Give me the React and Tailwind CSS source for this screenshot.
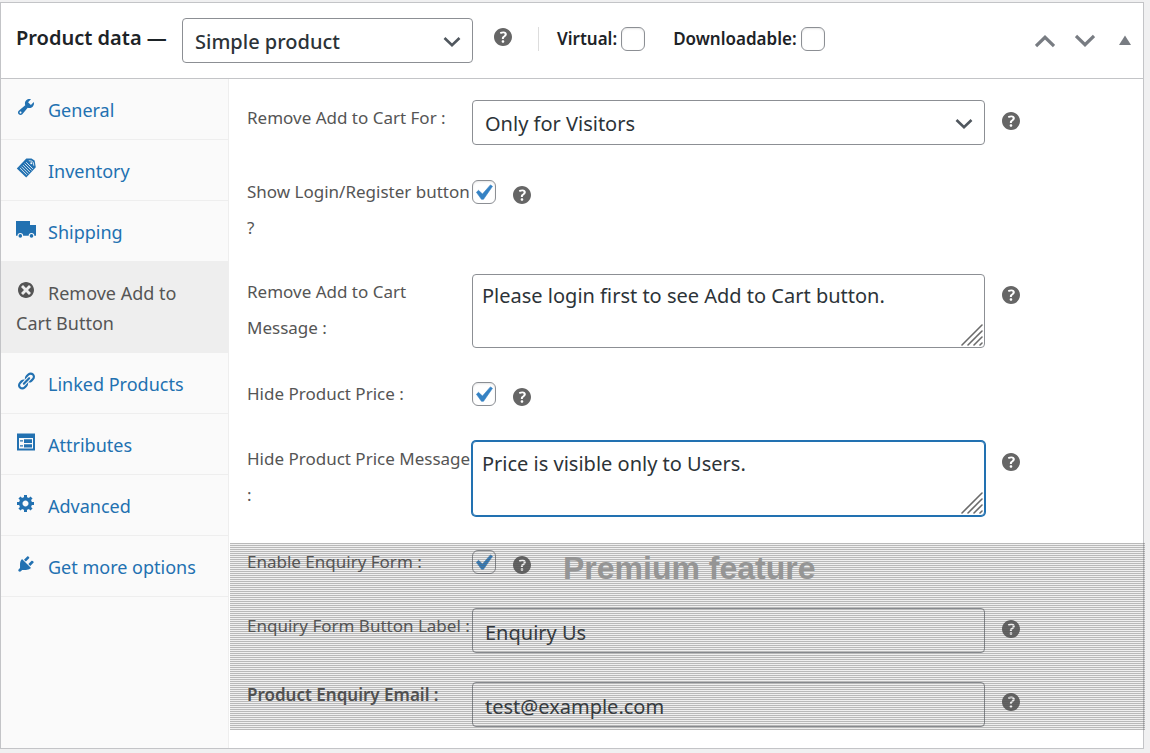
import { useState } from "react";

function HelpTip({ label }) {
  return (
    <button type="button" aria-label={label} className="block size-[18px] shrink-0 text-[#666666]">
      <svg viewBox="3 3 14 14" className="size-[18px]" fill="currentColor" aria-hidden="true">
        <path d="M17 10c0-3.87-3.14-7-7-7-3.87 0-7 3.13-7 7s3.13 7 7 7c3.86 0 7-3.13 7-7zm-6.3 1.48H9.14v-.43c0-.38.08-.7.24-.98s.46-.57.88-.89c.41-.29.68-.53.81-.71.14-.18.2-.39.2-.62 0-.25-.09-.44-.28-.58-.19-.13-.45-.19-.79-.19-.58 0-1.25.19-2 .57l-.64-1.28c.87-.49 1.8-.74 2.77-.74.81 0 1.45.2 1.92.58.48.39.71.91.71 1.55 0 .43-.09.8-.29 1.11-.19.32-.57.67-1.11 1.06-.38.28-.61.49-.71.63-.1.15-.15.34-.15.57v.35zm-1.47 2.74c-.18-.17-.27-.42-.27-.73 0-.33.08-.58.26-.75s.43-.25.77-.25c.32 0 .57.09.75.26s.27.42.27.74c0 .3-.09.55-.27.72-.18.18-.43.27-.75.27-.33 0-.58-.09-.76-.26z" />
      </svg>
    </button>
  );
}

function Checkbox({ id, defaultChecked = false, shaded = false }) {
  const [checked, setChecked] = useState(defaultChecked);
  return (
    <span className="relative block size-6 shrink-0">
      <input
        id={id}
        type="checkbox"
        checked={checked}
        onChange={(e) => setChecked(e.target.checked)}
        className={
          shaded
            ? "block size-6 appearance-none rounded-md border border-[#8c8f94] bg-transparent"
            : "block size-6 appearance-none rounded-md border border-[#8c8f94] bg-white shadow-[inset_0_1px_2px_rgba(0,0,0,0.1)]"
        }
      />
      {checked && (
        <svg viewBox="5.5 4.5 11 10" className="pointer-events-none absolute top-1 left-1 h-4 w-[17px]" fill="#3582c4" stroke="#3582c4" strokeWidth=".4" aria-hidden="true">
          <path d="M14.83 4.89l1.34.94-5.81 8.38H9.02L5.78 9.67l1.34-1.25 2.57 2.4z" />
        </svg>
      )}
    </span>
  );
}

function Select({ id, label, options, className }) {
  return (
    <span className="relative block">
      <select
        id={id}
        aria-label={label}
        className={`block h-[45px] w-full appearance-none rounded border border-[#8c8f94] bg-white pt-[3px] pr-10 pl-3 text-[20px] leading-6 text-[#2c3338] ${className}`}
      >
        {options.map((o) => (
          <option key={o}>{o}</option>
        ))}
      </select>
      <svg viewBox="0 0 18 12" className="pointer-events-none absolute top-[18px] right-3 h-3 w-[18px]" fill="none" stroke="#50575e" strokeWidth="2.6" aria-hidden="true">
        <path d="M1.5 2L9 9.3 16.5 2" />
      </svg>
    </span>
  );
}

function TextArea({ id, defaultValue, focused = false }) {
  return (
    <span className="relative block">
      <textarea
        id={id}
        defaultValue={defaultValue}
        rows={2}
        className={
          focused
            ? "block h-[75px] w-full resize-none rounded border border-[#2271b1] bg-white px-[9px] py-2 text-[20px] leading-7 text-[#2c3338] shadow-[0_0_0_1px_#2271b1] outline-none"
            : "block h-[74px] w-full resize-none rounded border border-[#8c8f94] bg-white px-[9px] py-[7px] text-[20px] leading-7 text-[#2c3338]"
        }
      />
      <svg viewBox="0 0 22 22" className="pointer-events-none absolute right-[2px] bottom-[2px] size-[22px]" fill="none" stroke="#6b6b6b" strokeWidth="1.6" strokeLinecap="round" aria-hidden="true">
        <path d="M1 21L21 1M7 21L21 7M13 21L21 13M19 21L21 19" />
      </svg>
    </span>
  );
}

const tabs = [
  {
    name: "General",
    icon: (
      <path d="M16.68 9.77c-1.34 1.34-3.3 1.67-4.95.99l-5.41 6.52c-.99.99-2.59.99-3.58 0s-.99-2.59 0-3.57l6.52-5.42c-.68-1.65-.35-3.61.99-4.95 1.28-1.28 3.12-1.62 4.72-1.06l-2.89 2.89 2.82 2.82 2.86-2.87c.53 1.58.18 3.39-1.08 4.65zM3.81 16.21c.4.39 1.04.39 1.43 0 .4-.4.4-1.04 0-1.43-.39-.4-1.03-.4-1.43 0-.39.39-.39 1.03 0 1.43z" />
    ),
  },
  {
    name: "Inventory",
    icon: (
      <>
        <path d="M.8 10.4L10.3.6 15.5.6 18.6 2.6 19.8 9.3 10.2 19.4z" />
        <g fill="none" stroke="#fafafa" strokeWidth=".8">
          <path d="M5.4 8.6l6.9 6.9M7 7.1l6.9 6.9M8.6 5.6l6.9 6.8M10.2 4.2l6.7 6.7M3.9 10l6.9 6.9" />
          <path d="M12.8 2.7l3.1.4 1.4 1.6.5 3" />
        </g>
        <circle cx="15.3" cy="5.2" r="1" fill="#fafafa" />
      </>
    ),
  },
  {
    name: "Shipping",
    icon: (
      <>
        <path d="M0 2H14V6H20V18H0z" />
        <g fill="#fafafa">
          <path d="M14.3 5.2h.7v.8h-.7zM0 16.7h20V20H0z" />
          <circle cx="4.3" cy="16.8" r="2.8" />
          <circle cx="15.5" cy="16.8" r="2.8" />
        </g>
        <circle cx="4.3" cy="16.9" r="1.8" />
        <circle cx="15.5" cy="16.9" r="1.8" />
      </>
    ),
  },
  {
    name: "Remove Add to Cart Button",
    active: true,
    icon: <path d="M10 2c4.42 0 8 3.58 8 8s-3.58 8-8 8-8-3.58-8-8 3.58-8 8-8zm5 11l-3-3 3-3-2-2-3 3-3-3-2 2 3 3-3 3 2 2 3-3 3 3z" />,
  },
  {
    name: "Linked Products",
    icon: (
      <path d="M17.74 2.76c1.68 1.69 1.68 4.41 0 6.1l-1.53 1.52c-1.12 1.12-2.7 1.47-4.14 1.09l2.62-2.61.76-.77.76-.76c.84-.84.84-2.2 0-3.04-.84-.85-2.2-.85-3.04 0l-.77.76-3.38 3.38c-.37-1.44-.02-3.02 1.1-4.14l1.52-1.53c1.69-1.68 4.42-1.68 6.1 0zM8.59 13.43l5.34-5.34c.42-.42.42-1.1 0-1.52-.44-.43-1.13-.39-1.53 0l-5.33 5.34c-.42.42-.42 1.1 0 1.52.44.43 1.13.39 1.52 0zm-.76 2.29l4.14-4.15c.38 1.44.03 3.02-1.09 4.14l-1.52 1.53c-1.69 1.68-4.41 1.68-6.1 0-1.68-1.68-1.68-4.42 0-6.1l1.53-1.52c1.12-1.12 2.7-1.47 4.14-1.1l-4.14 4.15c-.85.84-.85 2.2 0 3.05.84.84 2.2.84 3.04 0z" />
    ),
  },
  {
    name: "Attributes",
    icon: (
      <>
        <path d="M1 1.5h18V18.5H1z" />
        <path d="M3 6h14v10.5H3z" fill="#fafafa" />
        <path d="M8 7.3h8v3.7H8zM8 12.3h8v3.2H8zM4 8.3h3v1.2H4zM4 13.3h3v1.2H4z" />
      </>
    ),
  },
  {
    name: "Advanced",
    icon: (
      <path d="M18 12h-2.18c-.17.7-.44 1.35-.81 1.93l1.54 1.54-2.1 2.1-1.54-1.54c-.58.36-1.23.63-1.91.79V19H8v-2.18c-.68-.16-1.33-.43-1.91-.79l-1.54 1.54-2.12-2.12 1.54-1.54c-.36-.58-.63-1.23-.79-1.91H1V9.03h2.17c.16-.7.44-1.35.8-1.94L2.43 5.55l2.1-2.1 1.54 1.54c.58-.37 1.24-.64 1.93-.81V2h3v2.18c.68.16 1.33.43 1.91.79l1.54-1.54 2.12 2.12-1.54 1.54c.36.59.64 1.24.8 1.94H18V12zm-8.5 1.5c1.66 0 3-1.34 3-3s-1.34-3-3-3-3 1.34-3 3 1.34 3 3 3z" />
    ),
  },
  {
    name: "Get more options",
    icon: (
      <path d="M13.11 4.36L9.87 7.6 8 5.73l3.24-3.24c.35-.34 1.05-.2 1.56.32.52.51.66 1.21.31 1.55zm-8 1.77l.91-1.12 9.01 9.01-1.19.84c-.71.71-2.63 1.16-3.82 1.16H6.14L4.9 17.26c-.59.59-1.54.59-2.12 0-.59-.58-.59-1.53 0-2.12l1.24-1.24v-3.88c0-1.13.4-3.19 1.09-3.89zm7.26 3.97l3.24-3.24c.34-.35 1.04-.21 1.55.31.52.51.66 1.21.31 1.55l-3.24 3.25z" />
    ),
  },
];

function Sidebar() {
  return (
    <nav aria-label="Product data sections" className="w-[228px] shrink-0 border-r border-[#eeeeee] bg-[#fafafa]">
      <ul>
        {tabs.map((t) => (
          <li key={t.name}>
            <a
              href="#"
              aria-current={t.active ? "page" : undefined}
              className={
                t.active
                  ? "block border-b border-[#eeeeee] bg-[#eeeeee] px-[15px] pt-4 pb-[14px] text-[18px] leading-[30px] text-[#555555]"
                  : "block border-b border-[#eeeeee] px-[15px] pt-4 pb-[14px] text-[18px] leading-[30px] text-[#2271b1]"
              }
            >
              <svg viewBox="0 0 20 20" className="-mt-[5px] mr-3 mb-[5px] inline-block size-5 align-middle" fill="currentColor" aria-hidden="true">
                {t.icon}
              </svg>
              {t.name}
            </a>
          </li>
        ))}
      </ul>
    </nav>
  );
}

function Row({ id, label, bold, help, className, children }) {
  return (
    <div className={`grid grid-cols-[225px_minmax(0,513px)_auto] items-start pl-[18px] ${className}`}>
      <label htmlFor={id} className={bold ? "text-[17px] leading-9 font-semibold text-[#505050]" : "text-[17px] leading-9 text-[#555555]"}>
        {label}
      </label>
      {children}
      {help && (
        <div className={bold ? "pt-4 pl-[17px]" : "pt-3 pl-[17px]"}>
          <HelpTip label={`Help: ${label}`} />
        </div>
      )}
    </div>
  );
}

function CheckRow({ id, label, shaded, className }) {
  return (
    <Row id={id} label={label} className={className}>
      <div className="flex items-start gap-[17px] pt-[6px]">
        <Checkbox id={id} defaultChecked shaded={shaded} />
        <div className="pt-[6px]">
          <HelpTip label={`Help: ${label}`} />
        </div>
      </div>
    </Row>
  );
}

function Header() {
  return (
    <header className="flex items-start border-b border-[#c3c4c7] pt-[15px] pb-[15px] pl-[15px]">
      <h2 className="w-[166px] text-[20px] leading-10 font-semibold text-[#1d2327]">Product data —</h2>
      <div className="w-[291px]">
        <Select id="product-type" label="Product type" options={["Simple product", "Grouped product", "Variable product"]} className="font-medium" />
      </div>
      <div className="pt-[10px] pl-[21px]">
        <HelpTip label="Help: product type" />
      </div>
      <div className="mt-[9px] ml-[26px] flex h-6 items-center border-l border-[#dddddd] pl-[18px]">
        <label htmlFor="virtual" className="pr-1 text-[17px] leading-6 font-semibold text-[#1d2327]">Virtual:</label>
        <Checkbox id="virtual" />
        <label htmlFor="downloadable" className="pr-1 pl-7 text-[17px] leading-6 font-semibold text-[#1d2327]">Downloadable:</label>
        <Checkbox id="downloadable" />
      </div>
      <div className="ml-auto flex items-center gap-5 pt-4 pr-3 text-[#787c82]">
        <button type="button" aria-label="Move up">
          <svg viewBox="0 0 20 14" className="h-[14px] w-5" fill="none" stroke="currentColor" strokeWidth="3.2" aria-hidden="true">
            <path d="M1 12L10 3.3 19 12" />
          </svg>
        </button>
        <button type="button" aria-label="Move down">
          <svg viewBox="0 0 20 14" className="h-[14px] w-5" fill="none" stroke="currentColor" strokeWidth="3.2" aria-hidden="true">
            <path d="M1 2L10 10.7 19 2" />
          </svg>
        </button>
        <button type="button" aria-label="Toggle panel" className="pl-1">
          <svg viewBox="0 0 12 14" className="h-[14px] w-3" fill="currentColor" aria-hidden="true">
            <path d="M6 1.5L12 11H0z" />
          </svg>
        </button>
      </div>
    </header>
  );
}

const inputClass =
  "block h-[45px] w-full rounded border border-[#8c8f94] bg-transparent px-3 pt-[3px] text-[20px] leading-6 text-[#2c3338]";

export default function App() {
  return (
    <div className="min-h-screen bg-[#f0f0f1] pt-[2px] pr-[6px] pb-1 font-['Noto_Sans','Open_Sans',sans-serif]">
      <section className="border border-[#c3c4c7] bg-white">
        <Header />
        <div className="flex">
          <Sidebar />
          <form className="min-w-0 flex-1 pt-[21px] pb-[18px]" onSubmit={(e) => e.preventDefault()}>
            <Row id="remove-for" label="Remove Add to Cart For :" help className="min-h-[74px]">
              <Select id="remove-for" options={["Only for Visitors", "Only for Users", "For All"]} className="" />
            </Row>
            <CheckRow id="show-login" label="Show Login/Register button ?" className="min-h-[100px]" />
            <Row id="cart-message" label="Remove Add to Cart Message :" help className="min-h-[102px]">
              <TextArea id="cart-message" defaultValue="Please login first to see Add to Cart button." />
            </Row>
            <CheckRow id="hide-price" label="Hide Product Price :" className="min-h-[65px]" />
            <Row id="price-message" label="Hide Product Price Message :" help className="min-h-[102px]">
              <TextArea id="price-message" defaultValue="Price is visible only to Users." focused />
            </Row>
            <div className="relative">
              <CheckRow id="enquiry-form" label="Enable Enquiry Form :" shaded className="min-h-[65px] pt-px" />
              <Row id="enquiry-label" label="Enquiry Form Button Label :" help className="min-h-[69px]">
                <input id="enquiry-label" type="text" defaultValue="Enquiry Us" className={inputClass} />
              </Row>
              <Row id="enquiry-email" label="Product Enquiry Email :" bold help className="min-h-[53px]">
                <div className="pt-[5px]">
                  <input id="enquiry-email" type="email" defaultValue="test@example.com" className={inputClass} />
                </div>
              </Row>
              <div className="pointer-events-none absolute inset-y-0 -right-[2px] left-px bg-[repeating-linear-gradient(to_bottom,rgba(80,80,80,0.4)_0px,rgba(80,80,80,0.4)_1px,rgba(80,80,80,0.09)_1px,rgba(80,80,80,0.09)_2px)]">
                <p className="pt-1 pl-[333px] font-['Liberation_Sans',Arial,sans-serif] text-[32px] leading-[42px] font-bold text-[#959595]">
                  Premium feature
                </p>
              </div>
            </div>
          </form>
        </div>
      </section>
    </div>
  );
}
